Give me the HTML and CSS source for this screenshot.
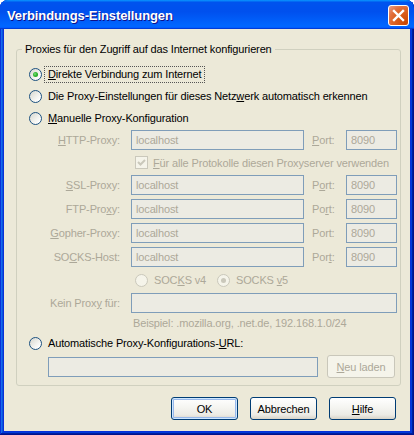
FILE: index.html
```html
<!DOCTYPE html>
<html lang="de">
<head>
<meta charset="utf-8">
<title>Verbindungs-Einstellungen</title>
<link rel="stylesheet" href="styles.css">
</head>
<body>
<div class="window">
  <div class="titlebar">
    <span class="title">Verbindungs-Einstellungen</span>
    <span class="close"><svg width="19" height="19" viewBox="0 0 19 19"><path d="M5 5 L14 14 M14 5 L5 14" stroke="#fff" stroke-width="2.4" stroke-linecap="square"/></svg></span>
  </div>
  <div class="client">
    <fieldset class="group">
      <legend>Proxies für den Zugriff auf das Internet konfigurieren</legend>
      <div class="gbody">
        <div class="opt"><span class="radio checked"></span><span class="lbl focus"><u>D</u>irekte Verbindung zum Internet</span></div>
        <div class="opt"><span class="radio"></span><span class="lbl">Die Proxy-Einstellungen für dieses Netz<u>w</u>erk automatisch erkennen</span></div>
        <div class="opt"><span class="radio"></span><span class="lbl"><u>M</u>anuelle Proxy-Konfiguration</span></div>
        <div class="manual">
          <div class="prow"><span class="plabel"><u>H</u>TTP-Proxy:</span><input class="field host" disabled value="localhost"><span class="portlbl"><u>P</u>ort:</span><input class="field port" disabled value="8090"></div>
          <div class="crow"><span class="check"><svg width="11" height="11" viewBox="0 0 11 11"><path d="M2 5 L4.5 7.5 L9 3" fill="none" stroke="#CAC8BB" stroke-width="2"/></svg></span><span class="dis"><u>F</u>ür alle Protokolle diesen Proxyserver verwenden</span></div>
          <div class="prow"><span class="plabel"><u>S</u>SL-Proxy:</span><input class="field host" disabled value="localhost"><span class="portlbl">P<u>o</u>rt:</span><input class="field port" disabled value="8090"></div>
          <div class="prow"><span class="plabel">FTP-Pro<u>x</u>y:</span><input class="field host" disabled value="localhost"><span class="portlbl">Po<u>r</u>t:</span><input class="field port" disabled value="8090"></div>
          <div class="prow"><span class="plabel"><u>G</u>opher-Proxy:</span><input class="field host" disabled value="localhost"><span class="portlbl">Port:</span><input class="field port" disabled value="8090"></div>
          <div class="prow"><span class="plabel">SO<u>C</u>KS-Host:</span><input class="field host" disabled value="localhost"><span class="portlbl">Por<u>t</u>:</span><input class="field port" disabled value="8090"></div>
          <div class="srow">
            <span class="sopt first"><span class="radio dim"></span><span class="dis">SOC<u>K</u>S v4</span></span>
            <span class="sopt"><span class="radio dim checked"></span><span class="dis">SOCKS <u>v</u>5</span></span>
          </div>
          <div class="prow"><span class="plabel">Kein Prox<u>y</u> für:</span><input class="field wide" disabled value=""></div>
          <div class="hint">Beispiel: .mozilla.org, .net.de, 192.168.1.0/24</div>
        </div>
        <div class="opt auto"><span class="radio"></span><span class="lbl">Automatische Proxy-Konfigurations-<u>U</u>RL:</span></div>
        <div class="urlrow"><input class="field url" disabled value=""><button class="btn disabled" disabled><u>N</u>eu laden</button></div>
      </div>
    </fieldset>
    <div class="buttons">
      <button class="btn default">OK</button>
      <button class="btn">Abbrechen</button>
      <button class="btn"><u>H</u>ilfe</button>
    </div>
  </div>
</div>
</body>
</html>
```

FILE: styles.css
```css
html, body {
  margin: 0;
  padding: 0;
  background: #ffffff;
}
body {
  font-family: "Liberation Sans", Arial, sans-serif;
  font-size: 11px;
  letter-spacing: -0.14px;
  color: #000;
}
u {
  text-decoration: underline;
  text-underline-offset: 1px;
}
.window {
  width: 414px;
  height: 435px;
  box-sizing: border-box;
  display: flex;
  flex-direction: column;
  background: #0831d9;
  border-radius: 8px 8px 0 0;
  overflow: hidden;
  box-shadow: inset -1px -1px #00138c, inset 1px 1px #0831d9, inset -2px -2px #001ea0, inset 2px 2px #166aee, inset -3px -3px #003bda, inset 3px 3px #0855dd;
}
.titlebar {
  height: 29px;
  flex: none;
  box-sizing: border-box;
  display: flex;
  align-items: flex-start;
  padding: 5px 5px 0 7px;
  background: linear-gradient(180deg, #0997ff, #0053ee 8%, #0050ee 40%, #06f 88%, #06f 93%, #005bff 95%, #003dd7 96%, #003dd7);
}
.title {
  flex: 1;
  color: #fff;
  font-weight: bold;
  font-size: 13px;
  line-height: 21px;
  letter-spacing: -0.1px;
  text-shadow: 1px 1px #0f1089;
}
.close {
  width: 21px;
  height: 21px;
  box-sizing: border-box;
  border: 1px solid #fff;
  border-radius: 3px;
  background: radial-gradient(circle at 90% 90%, #cc4600 0%, #dc6527 55%, #e36f3d 70%, #e8a08a 100%);
  display: flex;
  align-items: center;
  justify-content: center;
}
.client {
  flex: 1;
  margin: 0 4px 4px;
  background: #ece9d8;
  display: flex;
  flex-direction: column;
}
.group {
  margin: 14px 9px 0 12px;
  padding: 0 0 7px 0;
  border: 1px solid #d0d0bf;
  border-radius: 3px;
  min-width: 0;
}
.group legend {
  margin-left: 5px;
  padding: 0 3px;
  line-height: 13px;
}
.gbody {
  padding: 7px 0 0 12px;
  display: flex;
  flex-direction: column;
}
.opt {
  height: 22px;
  display: flex;
  align-items: center;
}
.opt.auto {
  height: 20px;
  margin-top: 3px;
}
.radio {
  width: 13px;
  height: 13px;
  box-sizing: border-box;
  flex: none;
  border-radius: 50%;
  border: 1px solid #1c5180;
  background: linear-gradient(135deg, #d6d6ce 0%, #f2f2ee 55%, #ffffff 85%);
  position: relative;
}
.radio.checked::after {
  content: "";
  position: absolute;
  left: 3px;
  top: 3px;
  width: 5px;
  height: 5px;
  border-radius: 50%;
  background: radial-gradient(circle at 40% 40%, #7be07b 0%, #2fb52f 45%, #1d9a1d 100%);
}
.radio.dim {
  border-color: #cac8bb;
  background: #f5f4ea;
}
.radio.dim.checked::after {
  background: #cac8bb;
}
.lbl {
  margin-left: 2px;
  padding: 1px 3px;
  border: 1px dotted transparent;
  line-height: 13px;
  white-space: nowrap;
}
.lbl.focus {
  border-color: #555;
}
.manual {
  margin-top: 1px;
  display: flex;
  flex-direction: column;
  gap: 4px;
  color: #aca899;
}
.prow {
  height: 20px;
  display: flex;
  align-items: center;
}
.plabel {
  width: 102px;
  box-sizing: border-box;
  padding-right: 11px;
  text-align: right;
  white-space: nowrap;
  flex: none;
}
.portlbl {
  width: 42px;
  box-sizing: border-box;
  padding-left: 8px;
  flex: none;
}
.field {
  height: 20px;
  box-sizing: border-box;
  border: 1px solid #7f9db9;
  background: #ecebe3;
  font-family: "Liberation Sans", Arial, sans-serif;
  font-size: 11px;
  letter-spacing: -0.14px;
  color: #aca899;
  -webkit-text-fill-color: #aca899;
  padding: 0 0 0 4px;
  margin: 0;
  flex: none;
  opacity: 1;
}
.field.host { width: 173px; }
.field.port { width: 51px; }
.field.wide { width: 266px; }
.field.url { width: 270px; }
.crow {
  height: 17px;
  display: flex;
  align-items: center;
  padding-left: 106px;
}
.check {
  width: 13px;
  height: 13px;
  box-sizing: border-box;
  border: 1px solid #cac8bb;
  background: #f5f4ea;
  flex: none;
  display: flex;
  align-items: center;
  justify-content: center;
  margin-right: 5px;
}
.dis {
  color: #aca899;
  white-space: nowrap;
}
.srow {
  height: 18px;
  display: flex;
  align-items: center;
  padding-left: 106px;
}
.sopt {
  display: flex;
  align-items: center;
  gap: 6px;
}
.sopt.first {
  width: 82px;
}
.hint {
  height: 13px;
  line-height: 13px;
  padding-left: 104px;
  white-space: nowrap;
}
.urlrow {
  margin-top: 2px;
  height: 23px;
  display: flex;
  align-items: center;
  padding-left: 19px;
}
.urlrow .btn {
  margin-left: 9px;
  width: 68px;
}
.btn {
  width: 67px;
  height: 23px;
  box-sizing: border-box;
  border: 1px solid #003c74;
  border-radius: 3px;
  background: linear-gradient(180deg, #ffffff 0%, #f5f5f1 45%, #ecebe5 80%, #d8d4c8 100%);
  font-family: "Liberation Sans", Arial, sans-serif;
  font-size: 11px;
  letter-spacing: -0.14px;
  color: #000;
  padding: 0;
  margin: 0;
  flex: none;
}
.btn.default {
  box-shadow: inset 0 0 0 1px #cee7ff, inset 0 0 0 2px #98b8ea;
}
.btn.disabled {
  border-color: #c9c7ba;
  background: #f5f4ea;
  color: #aca899;
}
.buttons {
  margin-top: 11px;
  display: flex;
  justify-content: flex-end;
  gap: 12px;
  padding-right: 14px;
}
```
